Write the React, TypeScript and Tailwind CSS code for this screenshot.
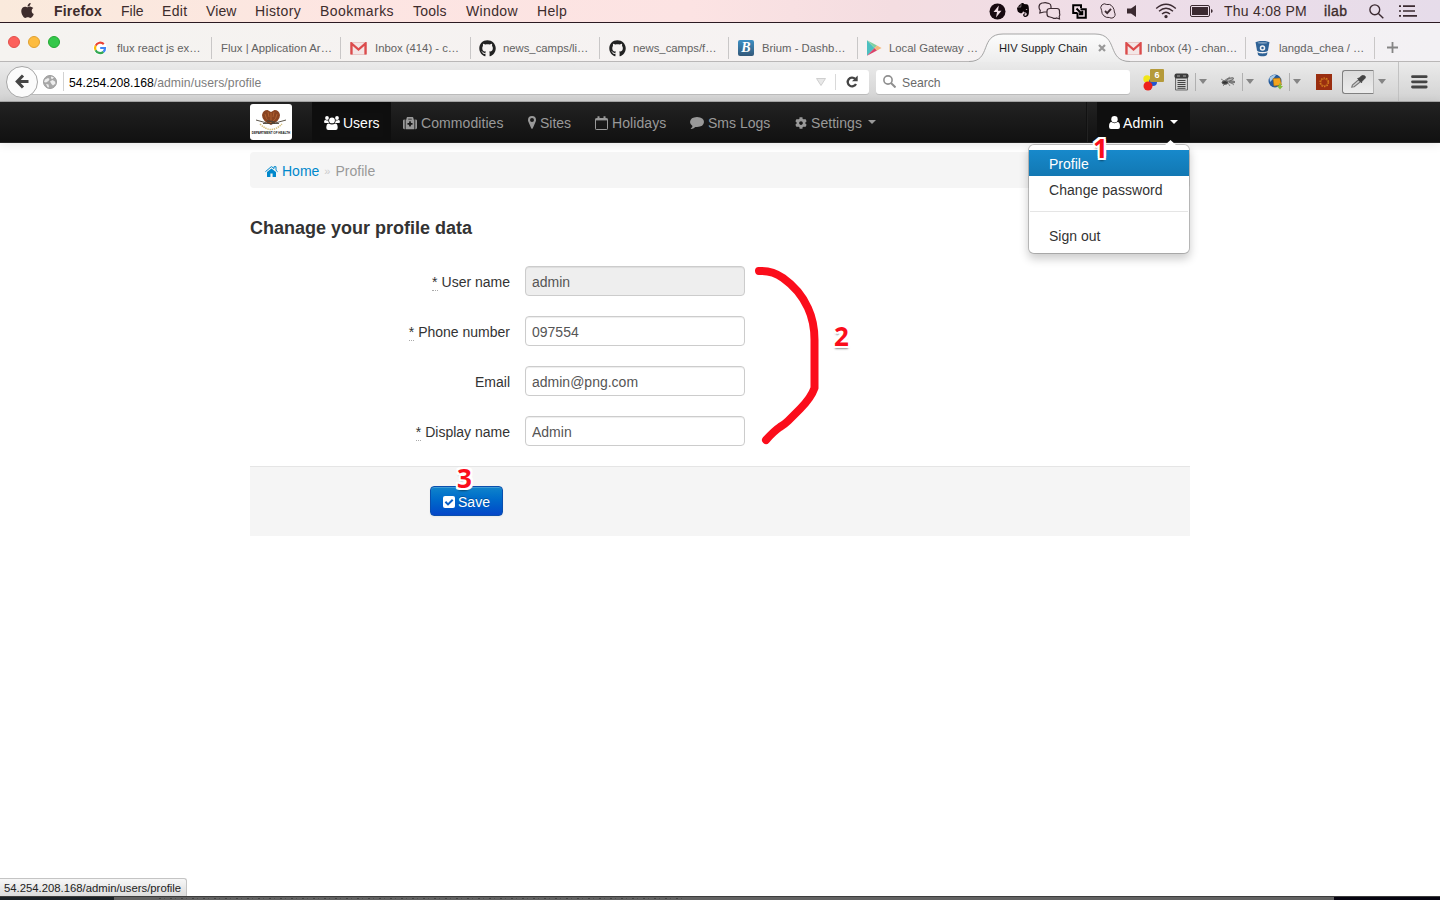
import React from 'react';
import { FaApple, FaGithub, FaMedkit, FaCog, FaEvernote } from 'react-icons/fa';

const GoogleIcon = () => (
  <svg width="14" height="14" viewBox="0 0 14 14" fill="none" strokeWidth="2.2">
    <circle cx="7" cy="7" r="7" fill="#fff" />
    <path d="M10.8 3.1A5 5 0 0 0 2.7 4.6" stroke="#ea4335" />
    <path d="M2.7 4.6A5 5 0 0 0 2.6 9.2" stroke="#fbbc05" />
    <path d="M2.6 9.2A5 5 0 0 0 10.4 10.8" stroke="#34a853" />
    <path d="M10.4 10.8A4.6 4.6 0 0 0 12 7H7.2" stroke="#4285f4" />
  </svg>
);

const GmailIcon = () => (
  <svg width="17" height="13" viewBox="0 0 17 13">
    <rect x="0.5" y="0.5" width="16" height="12" rx="1" fill="#f3e6e6" stroke="#dfaeac" strokeWidth="0.6" />
    <path d="M1.5 12.5V1.5L8.5 7.5L15.5 1.5V12.5" fill="none" stroke="#dc4b4c" strokeWidth="2.3" />
  </svg>
);

const BriumIcon = () => (
  <span className="flex h-4 w-4 items-center justify-center rounded-[2px] bg-gradient-to-b from-[#3c8fc4] to-[#33597a] font-['Liberation_Serif',serif] text-[14px] font-bold italic leading-none text-white">
    B
  </span>
);

const PlayIcon = () => (
  <svg width="16" height="16" viewBox="0 0 16 16">
    <path d="M1 0.3V15.7L8.5 8Z" fill="#4dbfc0" />
    <path d="M1 0.3L11 5.4L8.5 8Z" fill="#7fd0a0" />
    <path d="M1 15.7L11 10.6L8.5 8Z" fill="#d9436a" />
    <path d="M11 5.4L15.6 8L11 10.6L8.5 8Z" fill="#f5b77c" />
  </svg>
);

const BucketIcon = () => (
  <svg width="15" height="17" viewBox="0 0 15 17">
    <path d="M0.6 2.6C0.6 0.4 14.4 0.4 14.4 2.6L13 10.4C12 12.4 3 12.4 2 10.4Z" fill="#2f6296" />
    <path d="M2.5 12.2C5 13.8 10 13.8 12.5 12.2L12 14.8C10.5 16.8 4.5 16.8 3 14.8Z" fill="#2f6296" />
    <ellipse cx="7.5" cy="2.8" rx="4.8" ry="0.9" fill="#7e9fc0" />
    <circle cx="7.5" cy="8" r="2" fill="none" stroke="#f2f2f4" strokeWidth="1.5" />
  </svg>
);

type Tab = { label: string; icon: React.ReactNode; w: string; pad: string; tw: string };

const leftTabs: Tab[] = [
  { label: 'flux react js ex…', icon: <GoogleIcon />, w: 'w-[129px]', pad: 'pl-[10px]', tw: 'ml-[10px]' },
  { label: 'Flux | Application Ar…', icon: null, w: 'w-[129px]', pad: 'pl-[9px]', tw: 'tracking-[0.03px]' },
  { label: 'Inbox (414) - c…', icon: <GmailIcon />, w: 'w-[130px]', pad: 'pl-[9px]', tw: 'ml-[8px]' },
  { label: 'news_camps/li…', icon: <FaGithub size={17} color="#222" />, w: 'w-[129px]', pad: 'pl-[8px]', tw: 'ml-[7px]' },
  { label: 'news_camps/f…', icon: <FaGithub size={17} color="#222" />, w: 'w-[129px]', pad: 'pl-[9px]', tw: 'ml-[7px]' },
  { label: 'Brium - Dashb…', icon: <BriumIcon />, w: 'w-[129px]', pad: 'pl-[9px]', tw: 'ml-[8px]' },
  { label: 'Local Gateway …', icon: <PlayIcon />, w: 'w-[129px]', pad: 'pl-[8px]', tw: 'ml-[7px]' },
];

const rightTabs: Tab[] = [
  { label: 'Inbox (4) - chan…', icon: <GmailIcon />, w: 'w-[131px]', pad: 'pl-[10px]', tw: 'ml-[5px]' },
  { label: 'langda_chea / …', icon: <BucketIcon />, w: 'w-[129px]', pad: 'pl-[9px]', tw: 'ml-[9px]' },
];

const TabItem = ({ tab, line }: { tab: Tab; line: boolean }) => (
  <div className={`flex h-[22px] shrink-0 items-center overflow-hidden ${tab.w} ${tab.pad} ${line ? 'border-r border-[#c9c7c7]' : ''}`}>
    {tab.icon}
    <span className={`whitespace-nowrap text-[11.3px] text-[#626262] ${tab.tw}`}>{tab.label}</span>
  </div>
);

const MenuBar = () => (
  <header className="flex h-[23px] items-center border-b border-[#2b1a22] bg-[linear-gradient(90deg,#faeadc_0%,#fde5e2_25%,#fce3e3_48%,#f4dde1_62%,#eddde8_80%,#e6dcea_100%)] text-[14px] text-[#3d2c2c]">
    <div className="w-[54px] pl-[19px]"><FaApple size={17} className="-mt-px" /></div>
    <nav className="flex whitespace-nowrap">
      <b className="w-[67px] tracking-[0.2px]">Firefox</b>
      <span className="w-[41px]">File</span>
      <span className="w-[44px] tracking-[0.3px]">Edit</span>
      <span className="w-[49px] tracking-[0.1px]">View</span>
      <span className="w-[65px] tracking-[0.35px]">History</span>
      <span className="w-[93px] tracking-[0.45px]">Bookmarks</span>
      <span className="w-[53px] tracking-[0.2px]">Tools</span>
      <span className="w-[71px] tracking-[0.35px]">Window</span>
      <span className="w-[40px] tracking-[0.35px]">Help</span>
    </nav>
    <div className="ml-auto flex items-center">
      <svg width="17" height="17" viewBox="0 0 17 17" className="mr-[9px]"><circle cx="8.5" cy="8.5" r="8" fill="#180a10" /><path d="M9.8 2.5L4.5 9H8L7 14.5L12.5 7.7H9Z" fill="#f0dde4" /></svg>
      <FaEvernote size={16} color="#0c0507" className="-mt-[2px] mr-[7px]" />
      <svg width="23" height="18" viewBox="0 0 23 18" className="mr-[11px]" fill="#f0dde5" stroke="#3b2a31" strokeWidth="1.2"><path d="M4 1H5Q7.5 0.2 9.5 1.2L11 1.5Q13 2 13 4.5V7Q12.5 10 10 10H6L1.8 11L2.3 8.5Q1 7 1 5Q1 1.8 4 1Z" /><path d="M12 6.5H19Q21.5 6.5 21.5 9V11Q22.3 13 21.2 14.5L21.5 17L18.5 16Q16.5 17 14.5 15.7L12 15Q9 15 9 12V9Q9 6.5 12 6.5Z" /></svg>
      <svg width="15" height="15" viewBox="0 0 15 15" className="mr-[13px]" fill="none" stroke="#000" strokeWidth="2"><path d="M5 9H1.2V1.2H9V4M8.5 5.2H13.8V13.8H5.5V8.5M4.5 4.5L10 10M10.3 6.8V10.2H7" /></svg>
      <svg width="16" height="16" viewBox="0 0 16 16" className="mr-[11px]" fill="none" stroke="#3b2a31"><path d="M8 1.5Q9.4 1 11 2.2Q13.2 4 14 6.5Q14.2 8 14.4 9Q16.4 13 13 14.8Q11 15.6 9.3 14.5Q6 14.9 3.8 12.8Q1.6 10.8 1.6 7.3Q-0.3 4.2 1.8 2Q4 -0.2 6.8 1.5Z" /><path d="M5 8L7.2 10.1L11 5.8" strokeWidth="1.9" /></svg>
      <svg width="10" height="12" viewBox="0 0 10 12" className="mr-[18px]"><path d="M0 3.5H4L9 0V12L4 8.5H0Z" fill="#3b2a31" /></svg>
      <svg width="22" height="16" viewBox="0 0 22 16" className="mr-[13px]" fill="none" stroke="#3b2a31" strokeWidth="1.4"><path d="M1.2 5.5Q11 -3 20.8 5.5M4 8.3Q11 2 18 8.3M7 11Q11 7.4 15 11" /><circle cx="11" cy="13.6" r="1" fill="#3b2a31" /></svg>
      <svg width="23" height="12" viewBox="0 0 23 12" className="mr-[11px]"><rect x="0.5" y="0.5" width="19" height="11" rx="1.5" fill="none" stroke="#3b2a31" /><rect x="2" y="2" width="16" height="8" fill="#3b2a31" /><path d="M21 4Q22.7 4.5 22.7 6T21 8Z" fill="#3b2a31" /></svg>
      <span className="w-[100px] whitespace-nowrap tracking-[0.25px]">Thu 4:08 PM</span>
      <span className="w-[45px] tracking-[0.4px] [-webkit-text-stroke:0.35px_#3d2c2c]">ilab</span>
      <svg width="15" height="15" viewBox="0 0 15 15" className="mr-[15px]" fill="none" stroke="#3b2a31" strokeWidth="1.4"><circle cx="5.8" cy="5.8" r="4.9" /><path d="M9.4 9.4L14.3 14.3" /></svg>
      <svg width="19" height="12" viewBox="0 0 19 12" className="mr-[22px]" stroke="#3b2a31" strokeWidth="1.7"><path d="M0 1.2H2M4 1.2H16M0 6H2M4 6H16M0 10.8H2M4 10.8H18" /></svg>
    </div>
  </header>
);

const TabStrip = () => (
  <div className="flex h-[39px] items-end border-b border-[#b9b7b7] bg-[linear-gradient(90deg,#f5f3f0,#f6f2f2_60%,#f3f1f4)] pb-[2px]">
    <div className="mb-[11px] flex w-[83px] shrink-0 gap-2 pl-2">
      <i className="h-3 w-3 rounded-full border border-[#e2504b] bg-[#fc615c]" />
      <i className="h-3 w-3 rounded-full border border-[#e0a030] bg-[#fdbc40]" />
      <i className="h-3 w-3 rounded-full border border-[#23a833] bg-[#34c84a]" />
    </div>
    {leftTabs.map((t, i) => <TabItem key={i} tab={t} line={i < 6} />)}
    <div className="relative mb-[-3px] flex h-[29px] w-[128px] shrink-0 items-center">
      <svg className="absolute bottom-0 left-[-18px]" width="164" height="29" viewBox="0 0 164 29">
        <defs><linearGradient id="t" x2="0" y2="1"><stop stopColor="#fcfcfc" /><stop offset="1" stopColor="#ededed" /></linearGradient></defs>
        <path d="M0 28.5C23 28.5 10 1 34 1H126C150 1 137 28.5 161 28.5V29H0Z" fill="url(#t)" />
        <path d="M0 28.5C23 28.5 10 1 34 1H126C150 1 137 28.5 161 28.5" fill="none" stroke="#a5a5a5" />
      </svg>
      <span className="relative ml-[5px] whitespace-nowrap pl-[7px] text-[11.2px] text-[#1d1d1d]">HIV Supply Chain</span>
      <svg className="relative ml-[11px]" width="8" height="8" viewBox="0 0 8 8" stroke="#999" strokeWidth="2.2"><path d="M1 1L7 7M7 1L1 7" /></svg>
    </div>
    {rightTabs.map((t, i) => <TabItem key={i} tab={t} line />)}
    <svg className="mb-[6px] ml-[12px]" width="11" height="11" viewBox="0 0 11 11" stroke="#858585" strokeWidth="1.8"><path d="M5.5 0V11M0 5.5H11" /></svg>
  </div>
);

const Down = () => <i className="block h-0 w-0 border-x-4 border-t-[5px] border-x-transparent border-t-[#858585]" />;

const Toolbar = () => (
  <div className="flex h-[40px] items-center border-b border-[#a9a9a9] bg-gradient-to-b from-[#ebebeb] to-[#d2d2d2]">
    <div className="z-10 ml-[6px] flex h-8 w-8 shrink-0 items-center justify-center rounded-full border border-[#a6a6a6] bg-[#fbfbfb]">
      <svg width="14" height="15" viewBox="0 0 14 15" fill="none" stroke="#444" strokeWidth="3"><path d="M13.5 7.5H3M8 1.5L2.2 7.5L8 13.5" /></svg>
    </div>
    <div className="-ml-2 flex h-6 w-[839px] shrink-0 items-center rounded-r-[3px] bg-white pl-[13px] shadow-[0_1px_0_#bcbcbc]">
      <svg width="14" height="14" viewBox="0 0 14 14"><circle cx="7" cy="7" r="6.5" fill="#a8a8a8" stroke="#9c9c9c" /><path d="M2 4.5L5 3L6.5 4L5.5 6L3 7.5L1 7ZM7 6.5L9.5 5L12 6.5L12.5 8.5L10 10.5L8.5 9ZM8 1.5L11 2.2L9.5 4L8 3.5ZM3 9L5.5 9.5L6 12.5L4.5 12Z" fill="#ededed" /></svg>
      <span className="ml-[6px] h-[19px] border-l border-[#d2d2d2]" />
      <span className="ml-[5px] mt-[2px] whitespace-nowrap text-[12.2px] tracking-[0.07px] text-[#7d7d7d]"><span className="tracking-normal text-black">54.254.208.168</span>/admin/users/profile</span>
      <svg className="ml-auto" width="10" height="8" viewBox="0 0 10 8"><path d="M0.5 0.5H9.5L5 7.5Z" fill="#e8e8e8" stroke="#cfcfcf" /></svg>
      <span className="ml-[9px] h-4 border-l border-[#d9d9d9]" />
      <svg className="ml-[10px] mr-[11px]" width="12" height="13" viewBox="0 0 12 13"><path d="M9.2 3.8A4.4 4.4 0 1 0 10 9" fill="none" stroke="#444" strokeWidth="2.3" /><path d="M11.7 0.4V6.3H6Z" fill="#444" /></svg>
    </div>
    <div className="ml-[7px] flex h-6 w-[254px] shrink-0 items-center rounded-[3px] bg-white pl-[7px] shadow-[0_1px_0_#bcbcbc]">
      <svg width="13" height="13" viewBox="0 0 13 13" fill="none" stroke="#8f8f8f" strokeWidth="1.6"><circle cx="5" cy="5" r="4.1" /><path d="M8 8L12.5 12.5" strokeWidth="2" /></svg>
      <span className="ml-[6px] mt-[2px] text-[12.2px] text-[#6a6a6a]">Search</span>
    </div>
    <div className="relative ml-[12px] h-6 w-[22px] shrink-0">
      <svg className="mt-[4px]" width="16" height="17" viewBox="0 0 16 17"><circle cx="5" cy="5" r="3.7" fill="#f1e619" /><circle cx="11" cy="8" r="4" fill="#2355d0" /><circle cx="6" cy="12" r="4.5" fill="#ec211b" /></svg>
      <span className="absolute right-0 top-[-1px] flex h-[13px] w-[14px] items-center justify-center rounded-[1px] bg-[#b59a3a] text-[9px] font-bold text-white">6</span>
    </div>
    <svg className="ml-[10px] shrink-0" width="15" height="18" viewBox="0 0 15 18"><path d="M1.5 2H13.5V17H1.5Z" fill="#d0d0d0" stroke="#6c6c6c" /><rect x="0.5" y="0.5" width="14" height="5" rx="2" fill="#3c3c3c" /><path d="M3 3H6M9 3H12" stroke="#aaa" /><path d="M3.5 7.5H11.5M3.5 9.5H11.5M3.5 11.5H11.5M3.5 13.5H11.5M3.5 15.3H11.5" stroke="#444" /></svg>
    <div className="ml-[6px] flex h-[18px] shrink-0 items-center border-l border-[#b0b0b0] pl-[3px]"><Down /></div>
    <svg className="ml-[13px] shrink-0" width="16" height="14" viewBox="0 0 16 14" fill="none" stroke="#666"><path d="M1 4L6 7M6 8L3 11M8 8L10 11M10 7L14 10M5 5L10 2" strokeWidth="0.7" /><ellipse cx="5" cy="7.5" rx="3" ry="1.8" fill="#333" /><ellipse cx="10" cy="4.5" rx="3.6" ry="1.3" transform="rotate(-20 10 4.5)" fill="#bbb" /><ellipse cx="12" cy="7" rx="3" ry="1" fill="#999" /></svg>
    <div className="ml-[6px] flex h-[18px] shrink-0 items-center border-l border-[#b0b0b0] pl-[3px]"><Down /></div>
    <svg className="ml-[14px] shrink-0" width="16" height="16" viewBox="0 0 16 16"><circle cx="7" cy="7" r="6.5" fill="#235a9c" /><path d="M1.5 4Q5 0 8 1L5 5L2 8Z" fill="#a8cbe8" /><path d="M5 4.5L12 4L13.5 11L6 12Z" fill="#f3a41d" stroke="#a86b10" strokeWidth="0.6" /><path d="M9 12H11V9.5H13V12H15L12 15.5Z" fill="#83bc3a" /></svg>
    <div className="ml-[5px] flex h-[18px] shrink-0 items-center border-l border-[#b0b0b0] pl-[3px]"><Down /></div>
    <svg className="ml-[15px] shrink-0" width="16" height="16" viewBox="0 0 16 16"><rect width="16" height="16" fill="#9a2e10" /><circle cx="8.3" cy="8.3" r="4.2" fill="none" stroke="#d9801e" strokeWidth="1.4" strokeDasharray="1.5 1.14" /><circle cx="8.3" cy="8.3" r="3.4" fill="none" stroke="#c26c1d" strokeWidth="0.7" /></svg>
    <div className="ml-[10px] flex h-6 w-[32px] shrink-0 items-center justify-center rounded-l-[3px] border border-[#808080] border-r-[#b5b5b5] bg-gradient-to-b from-[#dcdcdc] to-[#ececec]">
      <svg width="17" height="13" viewBox="0 0 18 15"><path d="M1.2 14L2 11.5L9 5.5L11 8L4 13.5Z" fill="#d0d0d0" stroke="#777" strokeWidth="1.3" /><path d="M8 4L10 3.5L12.5 1Q15 -0.3 16.7 1.5Q17.6 3.4 15.5 5L13 7L12.5 9Z" fill="#444" stroke="#444" /></svg>
    </div>
    <div className="ml-[4px] shrink-0"><Down /></div>
    <div className="ml-[12px] flex h-full items-center border-l border-[#c2c2c2] pl-[12px]">
      <svg width="17" height="14" viewBox="0 0 17 14" stroke="#444" strokeWidth="2.8" strokeLinecap="round"><path d="M1.5 1.7H15.2M1.5 6.8H15.2M1.5 12H15.2" /></svg>
    </div>
  </div>
);

const UsersIcon = () => (
  <svg width="16" height="14" viewBox="0 0 16 14" fill="currentColor"><circle cx="3" cy="2" r="1.9" /><circle cx="13" cy="2" r="1.9" /><circle cx="8" cy="4.4" r="2.9" /><path d="M0 6.3Q0 4.1 1.4 4.1Q3 5 4.3 4.2Q4.2 6 5.1 7H1.5Q0 7 0 6.3ZM16 6.3Q16 4.1 14.6 4.1Q13 5 11.7 4.2Q11.8 6 10.9 7H14.5Q16 7 16 6.3ZM2.3 11.8Q2.3 7.4 4.8 7.4Q8 9.6 11.2 7.4Q13.7 7.4 13.7 11.8Q13.7 14 11.7 14H4.3Q2.3 14 2.3 11.8Z" /></svg>
);
const PinIcon = () => <svg width="8" height="13" viewBox="0 0 8 13" fill="currentColor"><path fillRule="evenodd" d="M4 0Q8 0 8 4Q8 5 7.6 5.8L4.8 12.3Q4 13.3 3.2 12.3L0.4 5.8Q0 5 0 4Q0 0 4 0ZM4 2A2 2 0 0 0 4 6A2 2 0 0 0 4 2Z" /></svg>;
const CalendarIcon = () => <svg width="13" height="14" viewBox="0 0 13 14" fill="none" stroke="currentColor"><rect x="0.5" y="2.5" width="12" height="11" rx="0.7" /><path d="M0.5 3.6H12.5" strokeWidth="1.6" /><path d="M3.5 0.2V3.5M9.5 0.2V3.5" strokeWidth="2" /></svg>;
const CommentIcon = () => <svg width="14" height="12" viewBox="0 0 14 12" fill="currentColor"><path d="M7 0Q14 0.4 14 5Q13.6 9.8 7 10Q6 10 5.4 9.9Q3.4 11.8 1 12Q0.5 11.8 1 11.3Q2.4 10.3 2.5 8.9Q0 7.4 0 5Q0.4 0.2 7 0Z" /></svg>;
const UserIcon = () => <svg width="11" height="13" viewBox="0 0 11 13" fill="currentColor"><circle cx="5.5" cy="3.3" r="3.2" /><path d="M0 10.7Q0 6.1 2.5 6.1Q5.5 8.3 8.5 6.1Q11 6.1 11 10.7Q11 13 9 13H2Q0 13 0 10.7Z" /></svg>;
const HomeIcon = () => <svg width="13" height="11" viewBox="0 0 13 11" fill="#0088cc"><path d="M6.5 2.4L11 6.1V10.4Q11 11 10.4 11H7.6V7.5H5.4V11H2.6Q2 11 2 10.4V6.1Z" /><path d="M0.4 5.7L6 0.9Q6.5 0.5 7 0.9L9 2.6V0.7H11V4.3L12.6 5.7" fill="none" stroke="#0088cc" strokeWidth="1" /></svg>;
const CheckIcon = () => <svg className="mr-[3px]" width="12" height="12" viewBox="0 0 12 12"><rect width="12" height="12" rx="2" fill="white" /><path d="M2.4 5.8L5 8.4L9.7 3.7" fill="none" stroke="#0a5fc4" strokeWidth="2" /></svg>;

const navItems = [
  { label: 'Users', icon: <UsersIcon />, w: 'w-[79px]', iw: 'w-[19px]', cls: 'bg-[#0f0f0f] text-white shadow-[inset_0_3px_8px_rgba(0,0,0,.125)]' },
  { label: 'Commodities', icon: <FaMedkit size={14} />, w: 'w-[125px]', iw: 'w-[18px]', cls: 'text-[#999] tracking-[0.08px]' },
  { label: 'Sites', icon: <PinIcon />, w: 'w-[67px]', iw: 'w-[12px]', cls: 'text-[#999]' },
  { label: 'Holidays', icon: <CalendarIcon />, w: 'w-[95px]', iw: 'w-[17px]', cls: 'text-[#999] tracking-[0.08px]' },
  { label: 'Sms Logs', icon: <CommentIcon />, w: 'w-[105px]', iw: 'w-[18px]', cls: 'text-[#999]' },
  { label: 'Settings', icon: <FaCog size={12} />, w: 'w-[105px]', iw: 'w-[16px]', cls: 'text-[#999] tracking-[0.05px]' },
];

const Badge = ({ n, cls }: { n: string; cls: string }) => (
  <span className={`absolute z-30 font-['Open_Sans',sans-serif] text-[26px] font-bold leading-none text-[#fb0d1b] [text-shadow:2px_0_white,-2px_0_white,0_2px_white,0_-2px_white,2px_2px_white,-2px_2px_white,2px_-2px_white,-2px_-2px_white,0_3px_2px_rgba(0,0,0,.45)] ${cls}`}>{n}</span>
);

const NavBar = () => (
  <nav className="flex h-[41px] shrink-0 justify-center border-b border-[#252525] bg-gradient-to-b from-[#222] to-[#111] shadow-[0_1px_10px_rgba(0,0,0,.1)]">
    <div className="flex w-[940px]">
      <div className="mt-[2px] h-9 w-[42px] rounded-[3px] bg-white">
        <svg width="42" height="36" viewBox="0 0 42 36">
          <path d="M21 21Q12 17 12 11Q13 6 17.5 6L21 8L24.5 6Q29 6 30 11Q30 17 21 21Z" fill="#8a4421" />
          <path d="M21 19Q15 15 15 10M21 19Q27 15 27 10M21 18V9M18 8L19 13M24 8L23 13" stroke="#b0602f" fill="none" />
          <path d="M6 16L15 18.5L21 17L27 18.5L36 16M13 19.5H29M17 16L25 19.5" stroke="#4a4236" strokeWidth="0.9" fill="none" />
          <path d="M10 20Q21 31 32 20" stroke="#d5bd78" strokeWidth="1.5" strokeDasharray="1.4 .8" fill="none" />
          <text x="1.8" y="30" textLength="38.5" lengthAdjust="spacingAndGlyphs" fontSize="4" fontWeight="bold" fill="#111">DEPARTMENT OF HEALTH</text>
        </svg>
      </div>
      <div className="ml-[20px] flex">
        {navItems.map((n) => (
          <div key={n.label} className={`flex items-center whitespace-nowrap pl-3 pt-[2px] text-[14px] ${n.w} ${n.cls}`}>
            <span className={`-mt-px shrink-0 ${n.iw}`}>{n.icon}</span>
            {n.label}
            {n.label === 'Settings' && <i className="-mt-[2px] ml-[6px] h-0 w-0 border-x-4 border-t-4 border-x-transparent border-t-[#999]" />}
          </div>
        ))}
      </div>
      <div className="ml-auto mr-[9px] w-[2px] border-l border-r border-l-[#111] border-r-[#222]" />
      <div className="relative flex w-[93px] items-center bg-[#0f0f0f] pl-3 pt-[2px] text-[14px] text-white">
        <span className="-mt-px w-[14px]"><UserIcon /></span><span className="tracking-[0.2px]">Admin</span>
        <i className="-mt-[2px] ml-[6px] h-0 w-0 border-x-4 border-t-4 border-x-transparent border-t-white" />
        <div className="absolute right-0 top-[42px] z-20 w-[162px] rounded-[6px] border border-black/20 bg-white bg-clip-padding py-[5px] text-[#333] shadow-[0_5px_10px_rgba(0,0,0,.2)]">
          <svg className="absolute right-[12px] top-[-5px]" width="13" height="6" viewBox="0 0 13 6"><path d="M0 6L6.5 0L13 6Z" fill="white" /></svg>
          <div className="flex h-[26px] items-center bg-gradient-to-b from-[#1789cb] to-[#1278b3] pl-[20px] pt-[2px] text-white">Profile</div>
          <div className="flex h-[26px] items-center pl-[20px] pt-[2px] tracking-[0.05px]">Change password</div>
          <hr className="mx-px mb-[10px] mt-[9px] border-t border-[#e5e5e5]" />
          <div className="flex h-[26px] items-center pl-[20px] pt-[2px]">Sign out</div>
        </div>
        <Badge n="1" cls="left-[-4px] top-[33px]" />
      </div>
    </div>
  </nav>
);

const fields = [
  { label: 'User name', value: 'admin', req: true },
  { label: 'Phone number', value: '097554', req: true },
  { label: 'Email', value: 'admin@png.com', req: false },
  { label: 'Display name', value: 'Admin', req: true },
];

export default function App() {
  return (
    <div className="relative flex h-[900px] w-[1440px] flex-col overflow-hidden bg-white font-['Liberation_Sans',Arial,sans-serif] leading-5">
      <MenuBar />
      <TabStrip />
      <Toolbar />
      <NavBar />
      <main className="mx-auto w-[940px] flex-1 text-[14px] text-[#333]">
        <div className="mt-[9px] flex h-9 items-center rounded-[4px] bg-[#f5f5f5] pl-[15px] pt-[2px]">
          <HomeIcon />
          <span className="ml-[4px] text-[#0088cc]">Home</span>
          <span className="ml-[5px] text-[11px] text-[#ccc]">»</span>
          <span className="ml-[5px] text-[#999]">Profile</span>
        </div>
        <h1 className="mt-[30px] text-[18px] font-bold leading-5">Chanage your profile data</h1>
        <form className="relative mt-[28px] flex flex-col gap-5">
          {fields.map((f) => (
            <div key={f.label} className="flex h-[30px] items-center">
              <label className="w-[260px] pt-[2px] text-right">
                {f.req && <abbr title="required" className="mr-[4px] border-b border-dotted border-[#aaa] no-underline">*</abbr>}
                {f.label}
              </label>
              <input readOnly value={f.value} className={`ml-[15px] h-[30px] w-[220px] rounded-[4px] border border-[#ccc] px-[6px] pt-[2px] text-[14px] text-[#555] shadow-[inset_0_1px_1px_rgba(0,0,0,.075)] outline-none ${f.label === 'User name' ? 'bg-[#eee]' : 'bg-white'}`} />
            </div>
          ))}
          <svg className="absolute left-[500px] top-[-6px]" width="80" height="192" viewBox="0 0 80 192" fill="none" stroke="#fb0d1b" strokeWidth="8" strokeLinecap="round" strokeLinejoin="round">
            <path d="M9 11Q22 10 33 18Q50 30 58 48Q64.5 62 64.5 80V128Q61 138 50 149L38 161Q35 164 30 167Q24 171 16 180" />
          </svg>
          <Badge n="2" cls="left-[584px] top-[57px]" />
        </form>
        <div className="relative mt-[20px] h-[70px] border-t border-[#e5e5e5] bg-[#f5f5f5] pl-[180px] pt-[19px]">
          <button className="flex h-[30px] w-[73px] items-center justify-center rounded-[4px] border border-[#0a4fae] bg-gradient-to-b from-[#1184cb] to-[#0746c8] pt-px text-white shadow-[inset_0_1px_0_rgba(255,255,255,.2),0_1px_2px_rgba(0,0,0,.05)] [text-shadow:0_-1px_0_rgba(0,0,0,.25)]">
            <CheckIcon />Save
          </button>
          <Badge n="3" cls="left-[207px] top-[-2px]" />
        </div>
      </main>
      <div className="flex h-[18px] w-[187px] shrink-0 items-center whitespace-nowrap rounded-tr-[3px] border-r border-t border-[#c4c4c4] bg-gradient-to-b from-[#f7f7f7] to-[#dcdcdc] pl-[4px] text-[11.3px] text-[#222]">54.254.208.168/admin/users/profile</div>
      <footer className="flex h-1 shrink-0 border-t border-[#3c3c3c] bg-[#626262]"><div className="w-[114px] bg-[#1b2126]" /><div className="ml-[45px] mt-px h-px w-[525px] bg-[repeating-linear-gradient(90deg,#444_0_2px,#626262_2px_5px,#505050_5px_6px,#626262_6px_11px)]" /><div className="ml-auto w-[106px] bg-[#060410]" /></footer>
    </div>
  );
}
